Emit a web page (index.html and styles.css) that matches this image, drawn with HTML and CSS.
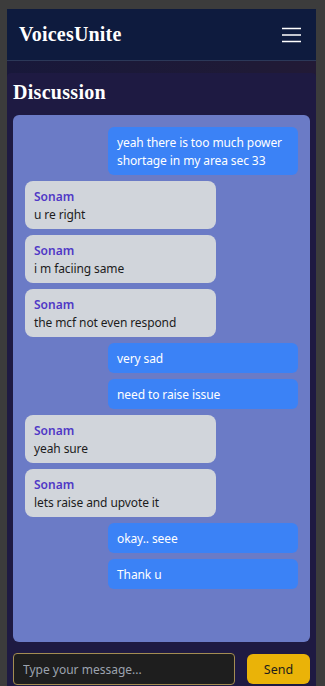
FILE: index.html
```html
<!DOCTYPE html>
<html lang="en">
<head>
<meta charset="utf-8">
<title>VoicesUnite - Discussion</title>
<link rel="stylesheet" href="styles.css">
</head>
<body>
<div class="app">
  <header class="topbar">
    <h1 class="brand">VoicesUnite</h1>
    <button class="menu" aria-label="Menu">
      <svg width="20" height="16" viewBox="0 0 20 16"><path d="M0 1.5h19M0 8h19M0 14.5h19" stroke="#fff" stroke-width="1.6" fill="none"/></svg>
    </button>
  </header>
  <div class="stage">
    <main class="section">
      <h2 class="title">Discussion</h2>
      <div class="chat">
        <div class="msg sent">yeah there is too much power shortage in my area sec 33</div>
        <div class="msg recv"><span class="name">Sonam</span>u re right</div>
        <div class="msg recv"><span class="name">Sonam</span>i m faciing same</div>
        <div class="msg recv"><span class="name">Sonam</span>the mcf not even respond</div>
        <div class="msg sent">very sad</div>
        <div class="msg sent">need to raise issue</div>
        <div class="msg recv"><span class="name">Sonam</span>yeah sure</div>
        <div class="msg recv"><span class="name">Sonam</span>lets raise and upvote it</div>
        <div class="msg sent">okay.. seee</div>
        <div class="msg sent">Thank u</div>
      </div>
      <form class="composer">
        <input class="field" type="text" placeholder="Type your message...">
        <button class="send" type="button">Send</button>
      </form>
    </main>
  </div>
</div>
</body>
</html>
```

FILE: styles.css
```css
* { box-sizing: border-box; }
html, body { margin: 0; padding: 0; }
body {
  background: #3c3c3c;
  height: 686px;
  overflow: hidden;
  font-family: "Noto Sans", sans-serif;
}
.app {
  margin: 9px 9px 0 7px;
  background: #1b1a36;
}
.topbar {
  height: 52px;
  background: #0e1b3e;
  border-bottom: 1px solid #2c3858;
  display: flex;
  align-items: center;
  justify-content: space-between;
  padding: 0 14px 0 12px;
}
.brand {
  margin: 0;
  color: #fff;
  font-family: "Liberation Serif", serif;
  font-weight: 700;
  font-size: 20px;
  letter-spacing: 0.2px;
}
.menu {
  background: none;
  border: 0;
  padding: 0;
  display: flex;
}
.stage {
  padding-top: 12px;
  background: linear-gradient(90deg, #18183a, #1f1a36 80%, #221a36);
}
.section {
  background: #1e1a42;
  border-radius: 4px 4px 0 0;
  padding: 6px 6px 20px;
}
.title {
  margin: 0 0 10px;
  color: #fff;
  font-family: "Liberation Serif", serif;
  font-weight: 700;
  font-size: 20px;
  line-height: 26px;
  letter-spacing: 0.3px;
}
.chat {
  background: #6b7bc6;
  border-radius: 6px;
  height: 527px;
  padding: 12px;
  display: flex;
  flex-direction: column;
  gap: 6px;
}
.msg {
  width: 190px;
  padding: 7px 9px 5px;
  font-size: 12px;
  letter-spacing: -0.1px;
  line-height: 18px;
  border-radius: 6px;
}
.sent {
  align-self: flex-end;
  background: #3b82f6;
  color: #fff;
}
.recv {
  align-self: flex-start;
  width: 191px;
  background: #d1d5db;
  color: #1c1c1c;
  border-radius: 8px;
}
.name {
  display: block;
  color: #4f38c6;
  font-weight: 600;
  letter-spacing: 0;
}
.composer {
  margin-top: 11px;
  display: flex;
  gap: 12px;
  align-items: center;
}
.field {
  flex: 1;
  height: 32px;
  background: #1e1e1e;
  border: 1px solid #a38c52;
  border-radius: 4px;
  padding: 0 9px;
  font-family: "Noto Sans", sans-serif;
  font-size: 12px;
  color: #e5e5e5;
  outline: none;
}
.field::placeholder { color: #9ca3af; }
.send {
  width: 63px;
  height: 30px;
  background: #eab308;
  border: 0;
  border-radius: 6px;
  font-family: "Noto Sans", sans-serif;
  font-size: 12.5px;
  color: #1c1c1c;
}
```
